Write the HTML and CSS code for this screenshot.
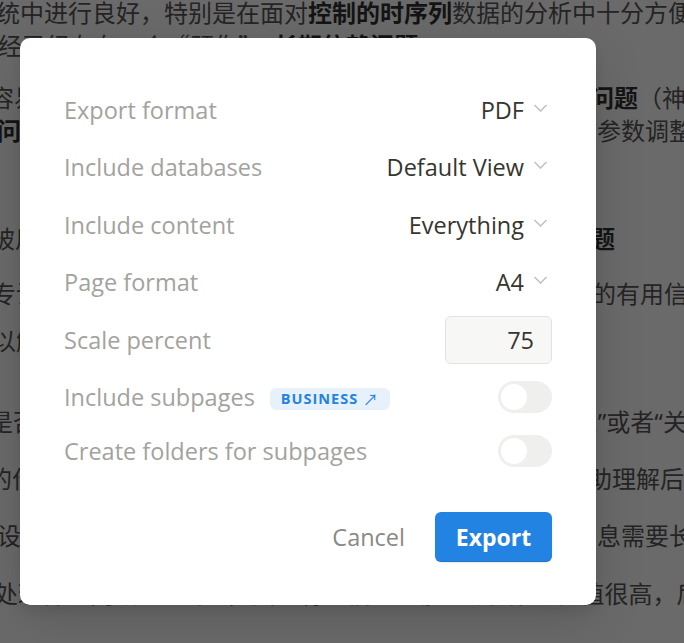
FILE: index.html
```html
<!DOCTYPE html>
<html lang="zh-CN">
<head>
<meta charset="utf-8">
<title>Export</title>
<link rel="stylesheet" href="styles.css">
</head>
<body>
<div class="page">
  <div class="line l-a">统中进行良好，特别是在面对<b>控制的时序列</b>数据的分析中十分方便使用的</div>
  <div class="line l-b">经已经存在一个“顽伤”：<b>长期依赖问题</b></div>
  <div class="line l-c">容易出现梯度消失或者梯度爆炸的情况，从而造成了严重<b>问题</b>（神经网络</div>
  <div class="line l-d"><b>问</b>题的本质在于网络对于长期信息的记忆能力不足，导致参数调整困难</div>
  <div class="line l-e">被用来解决上述提到的长期依赖问题，是一个非常好的<b>问题</b></div>
  <div class="line l-f">专设计的门控结构能够帮助网络记住序列中的长期存在着的有用信息</div>
  <div class="line l-g">以解决这个问题</div>
  <div class="line l-h">是否需要被记住的信息，这一步骤可以被理解为<span class="q">“</span>选择遗忘<span class="q">”</span>或者<span class="q">“</span>关闭<span class="q">”</span></div>
  <div class="line l-i">的作用是帮助网络决定哪些信息可以被保留，从而更好帮助理解后面</div>
  <div class="line l-j">设计的三个门控结构共同决定了哪些旧的和新的重要的信息需要长期保存</div>
  <div class="line l-k">处理神经网络的<span class="q">“</span>记忆<span class="q">”</span>，因为有的信息可能<span class="q">“</span>一开始<span class="q">”</span>时价值很高，后面</div>
</div>

<div class="overlay">
  <div class="modal">
    <div class="rows">
      <div class="row">
        <span class="label">Export format</span>
        <span class="select">PDF<svg class="chev" viewBox="0 0 14 8"><path d="M1 1l6 6 6-6"/></svg></span>
      </div>
      <div class="row">
        <span class="label">Include databases</span>
        <span class="select">Default View<svg class="chev" viewBox="0 0 14 8"><path d="M1 1l6 6 6-6"/></svg></span>
      </div>
      <div class="row">
        <span class="label">Include content</span>
        <span class="select">Everything<svg class="chev" viewBox="0 0 14 8"><path d="M1 1l6 6 6-6"/></svg></span>
      </div>
      <div class="row">
        <span class="label">Page format</span>
        <span class="select">A4<svg class="chev" viewBox="0 0 14 8"><path d="M1 1l6 6 6-6"/></svg></span>
      </div>
      <div class="row">
        <span class="label">Scale percent</span>
        <span class="input">75</span>
      </div>
      <div class="row">
        <span class="label">Include subpages <span class="badge">BUSINESS <span class="arrow">↗</span></span></span>
        <span class="toggle"><span class="knob"></span></span>
      </div>
      <div class="row row-last">
        <span class="label">Create folders for subpages</span>
        <span class="toggle"><span class="knob"></span></span>
      </div>
    </div>
    <div class="footer">
      <span class="cancel">Cancel</span>
      <span class="export">Export</span>
    </div>
  </div>
</div>
</body>
</html>
```
FILE: styles.css
```css
html, body {
  margin: 0;
  padding: 0;
  background: #6a6a6a;
  overflow: hidden;
}
body {
  width: 684px;
  height: 643px;
  position: relative;
}
.page {
  font-family: "Noto Sans CJK SC", "Noto Sans", sans-serif;
  font-size: 24px;
  color: #242424;
}
.line {
  height: 33px;
  line-height: 33px;
  white-space: nowrap;
  overflow: hidden;
  width: 684px;
}
.line b { font-weight: 700; color: #141414; }
.q { font-family: "Noto Sans", sans-serif; }
.l-a { margin-top: -5px; text-indent: -4px; }
.l-b { margin-top: 0; text-indent: -2px; }
.l-c { margin-top: 19px; text-indent: -10px; }
.l-d { margin-top: 0; text-indent: -3px; }
.l-e { margin-top: 75px; text-indent: -9px; }
.l-f { margin-top: 22px; text-indent: -8px; }
.l-g { margin-top: 14px; text-indent: -8px; }
.l-h { margin-top: 48px; text-indent: -11px; }
.l-i { margin-top: 24px; text-indent: -12px; }
.l-j { margin-top: 24px; text-indent: -3px; }
.l-k { margin-top: 25px; text-indent: -6px; }

.overlay {
  position: absolute;
  top: 0;
  left: 0;
  width: 684px;
  height: 643px;
  z-index: 10;
}
.modal {
  position: absolute;
  left: 20px;
  top: 38px;
  width: 576px;
  height: 567px;
  box-sizing: border-box;
  padding: 43px 44px 43px 44px;
  background: #ffffff;
  border-radius: 10px;
  box-shadow: 0 5px 10px rgba(0,0,0,0.08), 0 15px 50px rgba(0,0,0,0.14);
  display: flex;
  flex-direction: column;
  justify-content: space-between;
  font-family: "Open Sans", "Noto Sans", sans-serif;
}
.rows {
  display: flex;
  flex-direction: column;
}
.row {
  height: 57.5px;
  display: flex;
  align-items: center;
  justify-content: space-between;
}
.row-last { height: 50px; }
.label {
  font-size: 23.5px;
  color: #a3a29e;
  display: flex;
  align-items: center;
  gap: 15px;
}
.select {
  font-size: 23.5px;
  color: #37352f;
  display: flex;
  align-items: center;
  gap: 9px;
  padding-right: 4px;
}
.chev {
  width: 15px;
  height: 8px;
  fill: none;
  stroke: #c3c2bf;
  stroke-width: 1.6;
  margin-top: -4px;
}
.input {
  width: 107px;
  height: 48px;
  box-sizing: border-box;
  border: 1.5px solid #e3e2e0;
  border-radius: 6px;
  background: #f7f7f5;
  font-size: 23.5px;
  color: #37352f;
  display: flex;
  align-items: center;
  justify-content: flex-end;
  padding-right: 17px;
}
.badge {
  font-size: 14.5px;
  font-weight: 700;
  letter-spacing: 1px;
  color: #2383e2;
  background: #e7f1fb;
  border-radius: 6px;
  height: 22px;
  padding: 0 11px;
  display: inline-flex;
  align-items: center;
  gap: 5px;
  margin-top: 3px;
}
.arrow { font-weight: 400; font-size: 15px; }
.toggle {
  width: 54px;
  height: 32px;
  border-radius: 16px;
  background: #efefed;
  display: flex;
  align-items: center;
  padding: 0 3px;
  box-sizing: border-box;
}
.knob {
  width: 26px;
  height: 26px;
  border-radius: 50%;
  background: #ffffff;
}
.footer {
  display: flex;
  justify-content: flex-end;
  align-items: center;
  gap: 30px;
}
.cancel {
  font-size: 23.5px;
  color: #8a8985;
}
.export {
  width: 117px;
  height: 50px;
  background: #2383e2;
  border-radius: 6px;
  color: #ffffff;
  font-size: 23px;
  font-weight: 700;
  display: flex;
  align-items: center;
  justify-content: center;
  box-shadow: inset 0 -1px 0 rgba(15,15,15,0.1), 0 1px 2px rgba(15,15,15,0.1);
}
```
